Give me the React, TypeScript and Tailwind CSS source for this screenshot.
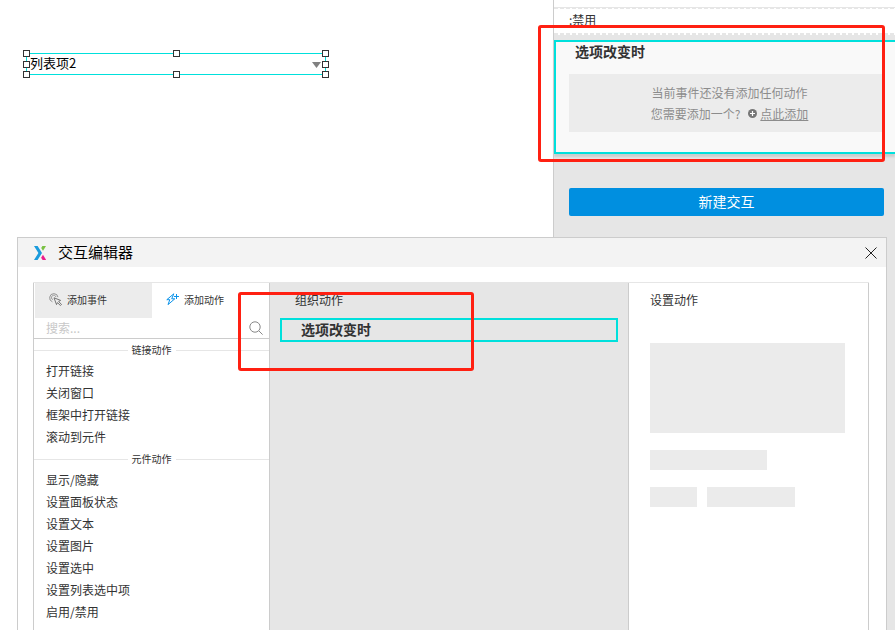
import { useState } from "react";
import type { ReactNode } from "react";

type ActionGroup = {
  title: string;
  actions: string[];
};

const actionGroups: ActionGroup[] = [
  { title: "链接动作", actions: ["打开链接", "关闭窗口", "框架中打开链接", "滚动到元件"] },
  {
    title: "元件动作",
    actions: ["显示/隐藏", "设置面板状态", "设置文本", "设置图片", "设置选中", "设置列表选中项", "启用/禁用"],
  },
];

// resize handles around the selected widget
const handles = [
  "-left-1 -top-1",
  "left-[146px] -top-1",
  "-right-1 -top-1",
  "-left-1 top-[7px]",
  "-right-1 top-[7px]",
  "-left-1 -bottom-1",
  "left-[146px] -bottom-1",
  "-right-1 -bottom-1",
];

function Logo() {
  return (
    <svg aria-hidden="true" className="h-4 w-3 shrink-0" viewBox="0 0 12 16">
      <path d="M0 1h3.6L8 8l-4.4 7H0l4.4-7z" fill="#1a9bdc" />
      <path d="M8.4 1H12L9 5.8 7.2 3z" fill="#7ac143" />
      <path d="M9 9.8 12.2 15H8.6L7.1 12.7z" fill="#ec1e8c" />
    </svg>
  );
}

function ClickIcon() {
  return (
    <svg aria-hidden="true" className="size-[13px] shrink-0" fill="none" stroke="#888" viewBox="0 0 13 13">
      <path d="M3.4 8.8A4.2 4.2 0 1 1 9 4.2" strokeWidth="0.9" />
      <path d="M3.9 6.7A2.3 2.3 0 1 1 7 4" strokeWidth="0.8" />
      <path d="m5 4.8 6.6 2.6-2 1.1 2.9 2.9-1.1 1.1-2.9-2.9-1 2z" fill="#ececec" stroke="#666" strokeWidth="0.9" />
    </svg>
  );
}

function BoltIcon() {
  return (
    <svg aria-hidden="true" className="size-[13px] shrink-0" fill="none" stroke="#0b93ea" viewBox="0 0 13 13">
      <path d="M7.8.8.8 6.7h3L2 11.6l6.8-5.8H5.7z" strokeLinejoin="round" />
      <path d="M10.5 1v5M8 3.5h5" />
    </svg>
  );
}

function SearchIcon() {
  return (
    <svg aria-hidden="true" className="size-[14px] shrink-0" fill="none" stroke="#888" viewBox="0 0 14 14">
      <circle cx="6" cy="6" r="5.2" />
      <path d="m9.8 9.8 3.8 3.8" />
    </svg>
  );
}

function PlusDot() {
  return (
    <svg aria-hidden="true" className="size-[9px] shrink-0" viewBox="0 0 9 9">
      <circle cx="4.5" cy="4.5" fill="#777" r="4.5" />
      <path d="M4.5 2v5M2 4.5h5" stroke="#fff" strokeWidth="1.2" />
    </svg>
  );
}

function SelectedWidget() {
  return (
    <div className="relative flex h-[22px] w-[300px] items-center border border-[#00e0dc]">
      <select aria-label="列表" className="h-5 w-full appearance-none bg-white pb-[2px] pl-[3px] text-[13px] leading-[18px] text-black outline-none">
        <option>列表项2</option>
      </select>
      <svg aria-hidden="true" className="pointer-events-none absolute right-1 top-2 h-[6px] w-[9px]" viewBox="0 0 9 6">
        <path d="M0 0h9L4.5 6z" fill="#808080" />
      </svg>
      {handles.map((position) => (
        <span className={`absolute size-[7px] border border-[#333] bg-white ${position}`} key={position} />
      ))}
    </div>
  );
}

function InteractionsPanel() {
  return (
    <aside className="relative w-[342px] shrink-0 border-l border-[#ccc] bg-[#e6e6e6] text-[#333]">
      <div className="h-[7px] bg-white" />
      <div className="h-px bg-[#e6e6e6]" />
      <div className="h-px bg-[repeating-linear-gradient(90deg,#e6e6e6_0_4px,#fff_4px_6px)]" />
      <div className="h-6 bg-white pl-[15px] text-[12px] leading-[22px]">:禁用</div>
      <div className="h-[2px] bg-[repeating-linear-gradient(90deg,#e6e6e6_0_4px,#fff_4px_6px)]" />

      <section className="mt-[5px] h-[114px] border-y-2 border-l-2 border-[#00e0dc] bg-[#f9f9f9] px-[13px] shadow-[0_3px_2px_#ccc]">
        <h2 className="h-5 pl-[6px] text-[14px] font-bold leading-[18px]">选项改变时</h2>
        <div className="mt-3 flex h-[58px] flex-col items-center justify-center bg-[#ececec] pl-2 text-[12px] leading-[21px] text-[#8c8c8c]">
          <p>当前事件还没有添加任何动作</p>
          <p className="flex items-center">
            您需要添加一个?
            <span className="ml-2 mr-[3px]"><PlusDot /></span>
            <a className="underline" href="#add">点此添加</a>
          </p>
        </div>
      </section>

      <div className="pl-[15px] pr-[11px] pt-[34px]">
        <button className="h-7 w-full rounded-[2px] bg-[#008fe0] pb-[2px] text-[14px] leading-5 text-white" type="button">
          新建交互
        </button>
      </div>

      <div className="pointer-events-none absolute -left-4 right-[10px] top-[25px] h-[137px] rounded-[3px] border-[3px] border-[#ff2012]" />
    </aside>
  );
}

function Tab({ active, icon, label, onClick }: { active: boolean; icon: ReactNode; label: string; onClick: () => void }) {
  return (
    <button
      className={`flex flex-1 items-center gap-[5px] pb-[2px] pl-[14px] text-[10px] leading-4 ${active ? "bg-white" : "bg-[#ececec]"}`}
      onClick={onClick}
      type="button"
    >
      {icon}
      {label}
    </button>
  );
}

function ActionPicker() {
  const [tab, setTab] = useState("action");

  return (
    <div className="w-[237px] shrink-0 border-x border-[#ccc] bg-white">
      <div className="flex h-[35px] pl-px">
        <Tab active={tab === "event"} icon={<ClickIcon />} label="添加事件" onClick={() => setTab("event")} />
        <Tab active={tab === "action"} icon={<BoltIcon />} label="添加动作" onClick={() => setTab("action")} />
      </div>
      <label className="flex h-[21px] items-center border-b border-[#ccc] pl-3 pr-[6px]">
        <input
          aria-label="搜索"
          className="h-5 min-w-0 flex-1 pb-[2px] text-[12px] leading-[18px] outline-none placeholder:text-[#c8c8c8]"
          placeholder="搜索..."
          type="text"
        />
        <SearchIcon />
      </label>
      {actionGroups.map((group) => (
        <section key={group.title}>
          <h3 className="flex h-[21px] items-center gap-1 pt-[2px] text-[10px] leading-4">
            <span className="h-px flex-1 bg-[#e6e6e6]" />
            <span className="pb-[2px]">{group.title}</span>
            <span className="h-px flex-1 bg-[#e6e6e6]" />
          </h3>
          <ul>
            {group.actions.map((action) => (
              <li key={action}>
                <button className="block h-[22px] w-full pl-3 text-left text-[12px] leading-5" type="button">
                  {action}
                </button>
              </li>
            ))}
          </ul>
        </section>
      ))}
    </div>
  );
}

function InteractionEditor() {
  return (
    <div
      aria-label="交互编辑器"
      className="absolute bottom-0 left-[17px] right-2 top-[237px] flex flex-col border border-b-0 border-[#ccc] bg-white text-[#333]"
      role="dialog"
    >
      <header className="flex h-[29px] shrink-0 items-center bg-[#f3f3f3] pl-4 pr-[9px]">
        <Logo />
        <h1 className="ml-3 flex-1 pb-[2px] text-[15px] leading-5 text-black">交互编辑器</h1>
        <button aria-label="关闭" type="button">
          <svg aria-hidden="true" className="size-3" stroke="#222" viewBox="0 0 12 12">
            <path d="m.5.5 11 11M11.5.5l-11 11" />
          </svg>
        </button>
      </header>

      <div className="ml-[15px] mr-[17px] mt-[15px] flex min-h-0 flex-1 border-t border-[#e6e6e6]">
        <ActionPicker />

        <div className="relative min-w-0 flex-1 bg-[#e6e6e6] px-[10px]">
          <h2 className="pl-[15px] pt-[7px] text-[12px] leading-5">组织动作</h2>
          <div className="mt-2 h-6 border-2 border-[#00e0dc] pl-[19px] text-[14px] font-bold leading-[18px]">选项改变时</div>
          <div className="pointer-events-none absolute -left-8 top-[9px] h-[79px] w-[236px] rounded-[3px] border-[3px] border-[#ff2012]" />
        </div>

        <div className="w-[241px] shrink-0 border-x border-[#ccc] bg-white pl-[21px] pr-[23px]">
          <h2 className="pt-[7px] text-[12px] leading-5">设置动作</h2>
          <div className="mt-[33px] h-[90px] bg-[#ebebeb]" />
          <div className="mt-[17px] h-5 w-[117px] bg-[#ebebeb]" />
          <div className="mt-[17px] flex gap-[10px]">
            <div className="h-5 w-[47px] bg-[#ebebeb]" />
            <div className="h-5 w-[88px] bg-[#ebebeb]" />
          </div>
        </div>
      </div>
    </div>
  );
}

export default function App() {
  return (
    <div className="relative flex min-h-screen overflow-hidden bg-white font-['Noto_Sans_CJK_SC',sans-serif]">
      <main className="min-w-0 flex-1 pl-[26px] pt-[53px]">
        <SelectedWidget />
      </main>
      <InteractionsPanel />
      <InteractionEditor />
    </div>
  );
}
